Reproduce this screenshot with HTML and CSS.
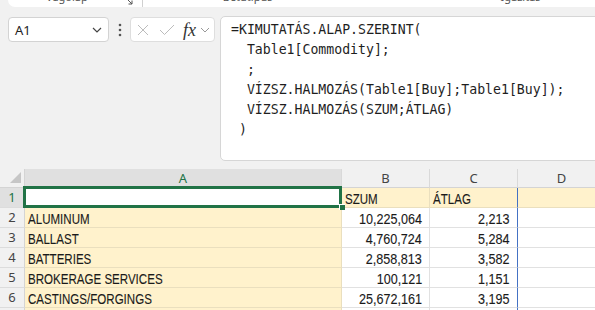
FILE: index.html
```html
<!DOCTYPE html>
<html lang="hu">
<head>
  <meta charset="UTF-8">
  <meta name="viewport" content="width=device-width, initial-scale=1.0">
  <title>Munkafüzet – KIMUTATÁS.ALAP.SZERINT</title>
  <link rel="stylesheet" href="styles.css">
</head>
<body>
  <!-- Bottom edge of the ribbon, scrolled almost out of view -->
  <div class="ribbon">
    <span class="group-label clipboard">Vágólap</span>
    <svg class="launcher" width="10" height="7" viewBox="0 0 10 7">
      <path d="M2 0 L7 5 M7 1.5 V5 H3.5" fill="none" stroke="#555" stroke-width="1"/>
    </svg>
    <span class="divider"></span>
    <span class="group-label font">Betűtípus</span>
    <span class="group-label align">Igazítás</span>
  </div>

  <div class="formula-row">
    <div class="name-box">
      <span>A1</span>
      <svg width="10" height="6" viewBox="0 0 10 6">
        <path d="M1 1 L5 5 L9 1" fill="none" stroke="#444" stroke-width="1.2"/>
      </svg>
    </div>

    <div class="more">
      <svg width="4" height="14" viewBox="0 0 4 14">
        <circle cx="2" cy="2" r="1.3" fill="#555"/>
        <circle cx="2" cy="7" r="1.3" fill="#555"/>
        <circle cx="2" cy="12" r="1.3" fill="#555"/>
      </svg>
    </div>

    <div class="fx-box">
      <svg class="cancel" width="12" height="12" viewBox="0 0 12 12">
        <path d="M1 1 L11 11 M11 1 L1 11" fill="none" stroke="#bcbcbc" stroke-width="1"/>
      </svg>
      <svg class="enter" width="16" height="12" viewBox="0 0 16 12">
        <path d="M1 6 L5.5 10.5 L15 1" fill="none" stroke="#bcbcbc" stroke-width="1"/>
      </svg>
      <span class="fx">fx</span>
      <svg class="fx-chevron" width="10" height="6" viewBox="0 0 10 6">
        <path d="M1 1 L5 5 L9 1" fill="none" stroke="#999" stroke-width="1"/>
      </svg>
    </div>

    <div class="formula-bar">
<pre>=KIMUTATÁS.ALAP.SZERINT(
  Table1[Commodity];
  ;
  VÍZSZ.HALMOZÁS(Table1[Buy];Table1[Buy]);
  VÍZSZ.HALMOZÁS(SZUM;ÁTLAG)
 )</pre>
    </div>
  </div>

  <div class="sheet">
    <div class="corner">
      <svg width="13" height="12" viewBox="0 0 13 12">
        <polygon points="12,0 12,11 1,11" fill="#c6c6c6"/>
      </svg>
    </div>
    <div class="col-head sel">A</div>
    <div class="col-head">B</div>
    <div class="col-head">C</div>
    <div class="col-head">D</div>

    <div class="row-head sel">1</div>
    <div class="cell active"></div>
    <div class="cell fill"><span class="t">SZUM</span></div>
    <div class="cell fill spill-edge"><span class="t">ÁTLAG</span></div>
    <div class="cell fill"></div>

    <div class="row-head">2</div>
    <div class="cell fill"><span class="t">ALUMINUM</span></div>
    <div class="cell num"><span class="t">10,225,064</span></div>
    <div class="cell num spill-edge"><span class="t">2,213</span></div>
    <div class="cell"></div>

    <div class="row-head">3</div>
    <div class="cell fill"><span class="t">BALLAST</span></div>
    <div class="cell num"><span class="t">4,760,724</span></div>
    <div class="cell num spill-edge"><span class="t">5,284</span></div>
    <div class="cell"></div>

    <div class="row-head">4</div>
    <div class="cell fill"><span class="t">BATTERIES</span></div>
    <div class="cell num"><span class="t">2,858,813</span></div>
    <div class="cell num spill-edge"><span class="t">3,582</span></div>
    <div class="cell"></div>

    <div class="row-head">5</div>
    <div class="cell fill"><span class="t">BROKERAGE SERVICES</span></div>
    <div class="cell num"><span class="t">100,121</span></div>
    <div class="cell num spill-edge"><span class="t">1,151</span></div>
    <div class="cell"></div>

    <div class="row-head">6</div>
    <div class="cell fill"><span class="t">CASTINGS/FORGINGS</span></div>
    <div class="cell num"><span class="t">25,672,161</span></div>
    <div class="cell num spill-edge"><span class="t">3,195</span></div>
    <div class="cell"></div>

    <div class="row-head">7</div>
    <div class="cell fill"></div>
    <div class="cell num"></div>
    <div class="cell num spill-edge"></div>
    <div class="cell"></div>
  </div>
</body>
</html>
```

FILE: styles.css
```css
* {
  box-sizing: border-box;
}

body {
  margin: 0;
  width: 595px;
  height: 310px;
  overflow: hidden;
  background-color: #f1f1f1;
  font-family: "Noto Sans", "Open Sans", sans-serif;
  color: #222;
}

/* Ribbon */

.ribbon {
  display: flex;
  align-items: flex-end;
  height: 7px;
  margin-left: 8px;
  background-color: white;
  border-radius: 0 0 0 7px;
  overflow: hidden;
}

.group-label {
  font-family: "Noto Sans", sans-serif;
  font-size: 11px;
  line-height: 14px;
  margin-bottom: 3px;
  color: #555;
  white-space: nowrap;
}

.group-label.clipboard {
  margin-left: 38px;
}

.launcher {
  margin-left: 37px;
  margin-bottom: 1px;
}

.divider {
  width: 1px;
  height: 7px;
  margin-left: 7px;
  background-color: #d0d0d0;
}

.group-label.font {
  margin-left: 80px;
}

.group-label.align {
  margin-left: 228px;
}

/* Name box, function box and formula bar */

.formula-row {
  display: flex;
  align-items: flex-start;
  margin-top: 9px;
  padding-left: 8px;
}

.name-box {
  display: flex;
  align-items: center;
  justify-content: space-between;
  width: 101px;
  height: 25px;
  margin-top: 1px;
  padding: 0 6px 0 6px;
  background-color: white;
  border: 1px solid #d3d3d3;
  border-radius: 4px;
  font-size: 13px;
}

.more {
  display: flex;
  justify-content: center;
  align-items: center;
  width: 21px;
  height: 25px;
  margin-top: 1px;
}

.fx-box {
  display: flex;
  align-items: center;
  width: 85px;
  height: 25px;
  margin-top: 1px;
  background-color: white;
  border: 1px solid #dedede;
  border-radius: 4px;
}

.fx-box .cancel {
  margin-left: 6px;
}

.fx-box .enter {
  margin-left: 10px;
}

.fx {
  margin-left: 8px;
  font-family: "Liberation Serif", serif;
  font-style: italic;
  font-size: 18px;
  line-height: 20px;
  color: #333;
}

.fx-chevron {
  margin-left: 4px;
}

.formula-bar {
  flex: 1;
  height: 145px;
  margin-left: 5px;
  margin-right: -10px;
  padding: 3px 0 0 10px;
  background-color: white;
  border: 1px solid #d6d6d6;
  border-radius: 5px 0 0 5px;
}

.formula-bar pre {
  margin: 0;
  font-family: "DejaVu Sans Mono", "Liberation Mono", monospace;
  font-size: 13.2px;
  line-height: 20px;
  color: #1e1e1e;
}

/* Worksheet grid */

.sheet {
  display: grid;
  grid-template-columns: 25px 317px 88px 88px 88px;
  grid-template-rows: 19px repeat(7, 20px);
  margin-top: 8px;
}

.corner {
  display: flex;
  align-items: flex-end;
  justify-content: flex-end;
  padding: 0 2px 3px 0;
  border-right: 1px solid #d4d4d4;
  border-bottom: 1px solid #d4d4d4;
}

.col-head {
  text-align: center;
  font-size: 13px;
  line-height: 18px;
  color: #444;
  border-right: 1px solid #d9d9d9;
  border-bottom: 1px solid #d4d4d4;
}

.col-head.sel {
  background-color: #e0e0e0;
  color: #217346;
}

.row-head {
  text-align: center;
  font-size: 13px;
  line-height: 19px;
  color: #444;
  border-right: 1px solid #d4d4d4;
  border-bottom: 1px solid #dcdcdc;
}

.row-head.sel {
  background-color: #e0e0e0;
  color: #217346;
}

.cell {
  padding: 2px 3px 0;
  background-color: white;
  border-right: 1px solid #e1e1e1;
  border-bottom: 1px solid #e1e1e1;
  font-family: "Liberation Sans", Arial, sans-serif;
  font-size: 15px;
  line-height: 17px;
  color: #1a1a1a;
  white-space: nowrap;
}

/* No narrow face is installed, so the text is squeezed to the sheet's narrow font */
.cell .t {
  display: inline-block;
  transform: scaleX(0.77);
  transform-origin: left center;
  -webkit-text-stroke: 0.12px #1a1a1a;
}

.cell.fill {
  background-color: #fff2cc;
  border-color: #eadfbe;
}

.cell.num {
  text-align: right;
  padding-right: 7px;
}

.cell.num .t {
  transform: scaleX(0.84);
  transform-origin: right center;
}

.cell.spill-edge {
  border-right-color: #4472c4;
}

.cell.active {
  position: relative;
  background-color: white;
}

.cell.active::after {
  content: "";
  position: absolute;
  top: -2px;
  left: -2px;
  right: -1px;
  bottom: -1px;
  border: 3px solid #217346;
}

.cell.active::before {
  content: "";
  position: absolute;
  right: -4px;
  bottom: -3px;
  width: 5px;
  height: 5px;
  background-color: #217346;
  border-left: 1px solid white;
  border-top: 1px solid white;
  box-sizing: content-box;
  z-index: 1;
}
```
